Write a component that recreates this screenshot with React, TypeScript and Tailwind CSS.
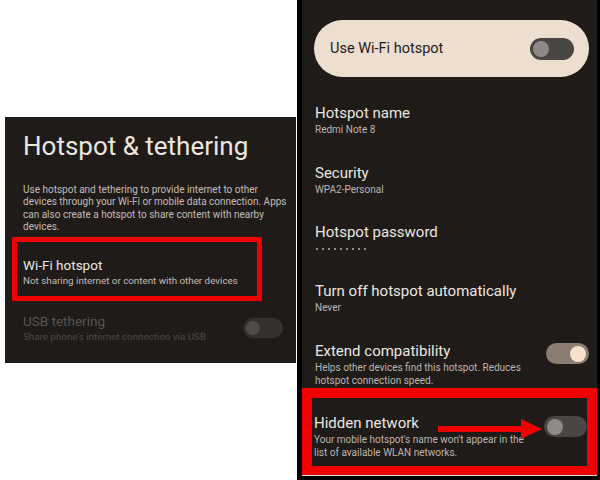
const font = { fontFamily: 'Roboto, "Noto Sans", sans-serif' }

function Toggle({ on, dim, className = '' }: { on?: boolean; dim?: boolean; className?: string }) {
  if (dim) {
    return (
      <div className={`flex items-center rounded-full bg-[#34302d] px-[3px] ${className}`}>
        <div className="h-[14px] w-[14px] rounded-full bg-[#4f4a46]" />
      </div>
    )
  }
  if (on) {
    return (
      <div className={`flex items-center justify-end rounded-full bg-[#8a7e73] px-[3px] ${className}`}>
        <div className="h-[16px] w-[16px] rounded-full bg-[#f6e1c9]" />
      </div>
    )
  }
  return (
    <div className={`flex items-center rounded-full bg-[#4a4644] px-[3px] ${className}`}>
      <div className="h-[16px] w-[16px] rounded-full bg-[#8f8a86]" />
    </div>
  )
}

function Row({ title, sub, lines }: { title: string; sub?: string; lines?: string[] }) {
  return (
    <div className="flex flex-col">
      <div className="text-[15px] leading-[20px] text-[#ece6e0]">{title}</div>
      {sub && <div className="text-[10px] leading-[13px] text-[#bdb5ae]">{sub}</div>}
      {lines && lines.map((l) => (
        <div key={l} className="text-[10px] leading-[13px] text-[#bdb5ae]">{l}</div>
      ))}
    </div>
  )
}

export default function App() {
  return (
    <div className="flex h-[480px] w-[600px] overflow-hidden bg-white" style={font}>
      {/* Left screenshot */}
      <div className="w-[297px] pl-[5px] pt-[117px]">
        <div className="flex h-[246px] w-[291px] flex-col bg-[#1f1b19] pt-[14px]">
          <div className="pl-[18px] text-[26px] leading-[30px] text-[#ece6e0]">Hotspot &amp; tethering</div>
          <div className="mt-[23px] pl-[18px] pr-[5px] text-[10px] leading-[12.3px] text-[#c4bdb6]">
            Use hotspot and tethering to provide internet to other devices through your Wi-Fi or mobile data connection. Apps can also create a hotspot to share content with nearby devices.
          </div>
          <div className="ml-[7px] mt-[4px] flex h-[64px] w-[250px] flex-col border-[5px] border-[#f00000] pl-[6px] pt-[15px]">
            <div className="text-[13.5px] leading-[17px] text-[#ece6e0]">Wi-Fi hotspot</div>
            <div className="text-[9.8px] leading-[13px] text-[#c4bdb6]">Not sharing internet or content with other devices</div>
          </div>
          <div className="mt-[12px] flex items-center pl-[18px] pr-[13px]">
            <div className="flex flex-1 flex-col">
              <div className="text-[13.5px] leading-[17px] text-[#59534e]">USB tethering</div>
              <div className="text-[9.8px] leading-[13px] text-[#4b4642]">Share phone's internet connection via USB</div>
            </div>
            <Toggle dim className="h-[20px] w-[40px]" />
          </div>
        </div>
      </div>

      {/* Right screenshot */}
      <div className="flex flex-1 flex-col border-l-[5px] border-r-[3px] border-black bg-black">
        <div className="flex flex-1 flex-col bg-[#1f1b19]">
          <div className="ml-[12px] mr-[8px] mt-[20px] flex h-[57px] items-center justify-between rounded-full bg-[#ecdfcf] pl-[16px] pr-[15px]">
            <span className="text-[14.5px] text-[#1f1b19]">Use Wi-Fi hotspot</span>
            <Toggle className="h-[22px] w-[44px]" />
          </div>
          <div className="mt-[26px] flex flex-col pl-[13px] pr-[8px]">
            <div className="h-[60px]"><Row title="Hotspot name" sub="Redmi Note 8" /></div>
            <div className="h-[59px]"><Row title="Security" sub="WPA2-Personal" /></div>
            <div className="h-[59px]">
              <Row title="Hotspot password" />
              <div className="flex gap-[4px] pl-[1px] pt-[6px]">
                {Array.from({ length: 9 }).map((_, i) => (
                  <div key={i} className="h-[2px] w-[2px] rounded-full bg-[#bdb5ae]" />
                ))}
              </div>
            </div>
            <div className="h-[60px]"><Row title="Turn off hotspot automatically" sub="Never" /></div>
            <div className="flex h-[47px] items-start justify-between">
              <Row title="Extend compatibility" lines={['Helps other devices find this hotspot. Reduces', 'hotspot connection speed.']} />
              <Toggle on className="mt-[2px] h-[21px] w-[43px]" />
            </div>
          </div>
          <div className="relative flex h-[87px] items-start justify-between border-[10px] border-b-[9px] border-[#f00000] pl-[2px] pt-[15px]">
            <Row title="Hidden network" lines={["Your mobile hotspot's name won't appear in the", 'list of available WLAN networks.']} />
            <Toggle className="mt-[3px] h-[21px] w-[43px] shrink-0" />
            <svg className="absolute left-[126px] top-[20px]" width="104" height="22" viewBox="0 0 104 22">
              <rect x="0" y="8" width="86" height="6" fill="#f00000" />
              <polygon points="83,1 104,11 83,21" fill="#f00000" />
            </svg>
          </div>
          <div className="h-[1px] bg-[#d8d8d8]" />
        </div>
        <div className="h-[4px] bg-black" />
      </div>
    </div>
  )
}
